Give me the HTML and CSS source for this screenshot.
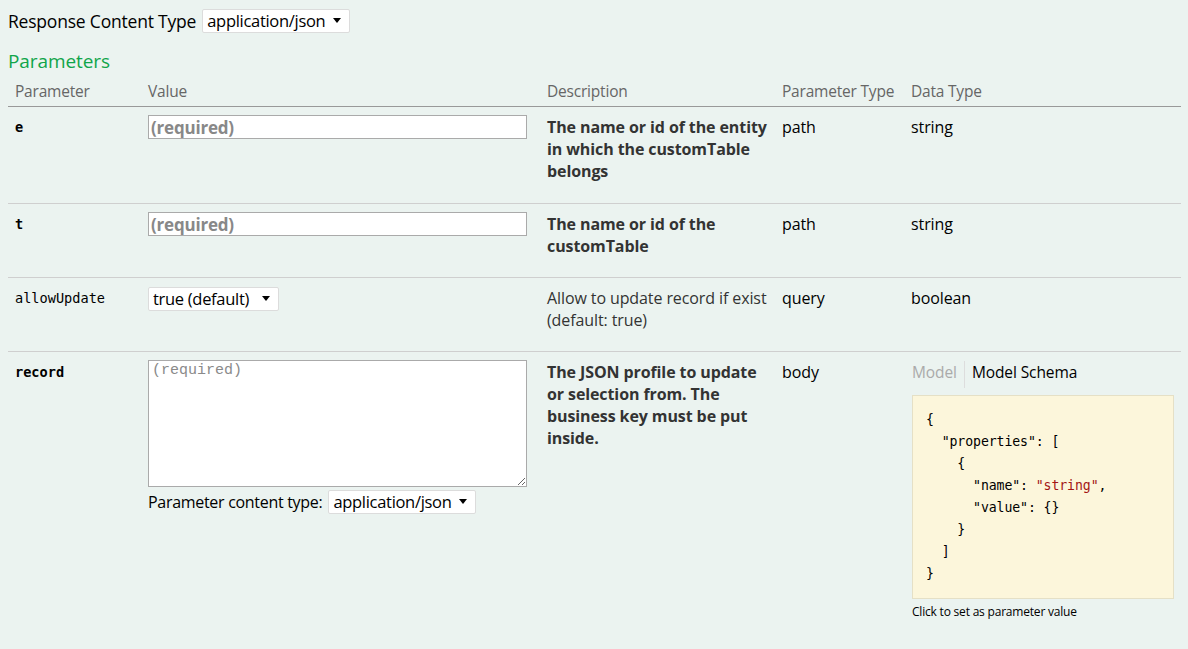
FILE: index.html
```html
<!DOCTYPE html>
<html lang="en">
<head>
<meta charset="utf-8">
<title>Parameters</title>
<link rel="stylesheet" href="styles.css">
</head>
<body>
<div class="content">
  <div class="response-type">
    <label class="rct-label">Response Content Type</label>
    <span class="select-wrap sel-rct">
      <select class="sel"><option>application/json</option></select>
    </span>
  </div>

  <h4 class="params-title">Parameters</h4>

  <table class="params">
    <colgroup>
      <col class="c1"><col class="c2"><col class="c3"><col class="c4"><col class="c5">
    </colgroup>
    <thead>
      <tr>
        <th>Parameter</th>
        <th>Value</th>
        <th>Description</th>
        <th>Parameter Type</th>
        <th>Data Type</th>
      </tr>
    </thead>
    <tbody>
      <tr class="r1">
        <td class="code required">e</td>
        <td><input class="text-in" type="text" placeholder="(required)"></td>
        <td class="desc strong">The name or id of the entity in which the customTable belongs</td>
        <td class="ptype">path</td>
        <td class="dtype">string</td>
      </tr>
      <tr>
        <td class="code required">t</td>
        <td><input class="text-in" type="text" placeholder="(required)"></td>
        <td class="desc strong">The name or id of the customTable</td>
        <td class="ptype">path</td>
        <td class="dtype">string</td>
      </tr>
      <tr>
        <td class="code">allowUpdate</td>
        <td>
          <span class="select-wrap sel-bool">
            <select class="sel"><option>true (default)</option><option>false</option></select>
          </span>
        </td>
        <td class="desc">Allow to update record if exist (default: true)</td>
        <td class="ptype">query</td>
        <td class="dtype">boolean</td>
      </tr>
      <tr class="last">
        <td class="code required">record</td>
        <td>
          <textarea class="body-ta" placeholder="(required)"></textarea>
          <div class="pct">
            <label>Parameter content type:</label>
            <span class="select-wrap sel-pct">
              <select class="sel"><option>application/json</option></select>
            </span>
          </div>
        </td>
        <td class="desc strong">The JSON profile to update or selection from. The business key must be put inside.</td>
        <td class="ptype">body</td>
        <td class="dtype">
          <div class="model-tabs">
            <span class="tab tab-off">Model</span>
            <span class="tab tab-on">Model Schema</span>
          </div>
          <pre class="schema">{
  "properties": [
    {
      "name": <span class="str">"string"</span>,
      "value": {}
    }
  ]
}</pre>
          <div class="hint">Click to set as parameter value</div>
        </td>
      </tr>
    </tbody>
  </table>
</div>
</body>
</html>
```

FILE: styles.css
```css
html, body {
  margin: 0;
  padding: 0;
  background: #ebf3f0;
}

body {
  font-family: "Open Sans", "Noto Sans", sans-serif;
  color: #000;
  height: 649px;
  overflow: hidden;
}

.content {
  padding: 9px 7px 0 8px;
}

.response-type {
  display: flex;
  align-items: center;
  gap: 6px;
  height: 24px;
}

.rct-label {
  font-size: 17.5px;
  letter-spacing: -0.2px;
}

.select-wrap {
  position: relative;
  display: inline-block;
}

.select-wrap::after {
  content: "";
  position: absolute;
  right: 9px;
  top: 50%;
  margin-top: -3px;
  border-left: 4px solid transparent;
  border-right: 4px solid transparent;
  border-top: 5px solid #000;
  pointer-events: none;
}

.sel {
  display: block;
  -webkit-appearance: none;
  appearance: none;
  background: #fff;
  border: 1px solid #dcdcdc;
  border-radius: 2px;
  font-family: "Open Sans", "Noto Sans", sans-serif;
  font-size: 16.5px;
  color: #000;
  height: 24px;
  padding: 0 0 0 4px;
  margin: 0;
  line-height: 22px;
  letter-spacing: -0.3px;
}

.sel-rct .sel { width: 148px; }
.sel-bool .sel { width: 131px; }
.sel-pct .sel { width: 148px; }

.params-title {
  margin: 15px 0 0 0;
  font-size: 19px;
  font-weight: normal;
  color: #10a54a;
  line-height: 26px;
  letter-spacing: -0.1px;
}

.params {
  width: 1173px;
  border-collapse: collapse;
  table-layout: fixed;
  margin-top: 7px;
}

.c1 { width: 133px; }
.c2 { width: 399px; }
.c3 { width: 235px; }
.c4 { width: 129px; }
.c5 { width: 277px; }

.params th {
  text-align: left;
  font-weight: normal;
  font-size: 15.5px;
  color: #666;
  padding: 0 7px 5px 7px;
  line-height: 20px;
  border-bottom: 1px solid #999;
  white-space: nowrap;
  letter-spacing: -0.2px;
}

.params td {
  vertical-align: top;
  padding: 9px 7px 20px 7px;
  font-size: 16px;
  line-height: 22px;
  border-bottom: 1px solid #cfcfcf;
}

.params tr.r1 td {
  padding-bottom: 21px;
}

.params tr.last td {
  border-bottom: none;
}

.params td.code {
  font-family: "DejaVu Sans Mono", "Liberation Mono", monospace;
  font-size: 13.6px;
  color: #000;
}

.params td.code.required {
  font-weight: bold;
}

.text-in {
  display: block;
  box-sizing: border-box;
  width: 379px;
  height: 24px;
  margin: -1px 0 0 0;
  border: 1px solid #aaa;
  background: #fff;
  padding: 0 2px;
  font-family: "Open Sans", "Noto Sans", sans-serif;
  font-size: 17px;
  font-weight: bold;
  letter-spacing: -0.2px;
}

.text-in::placeholder {
  color: #888;
  font-weight: bold;
}

.params td.desc {
  color: #333;
  padding-right: 4px;
  letter-spacing: -0.1px;
}

.params td.desc.strong {
  font-weight: bold;
}

.params td.ptype,
.params td.dtype {
  font-size: 16px;
  color: #000;
  letter-spacing: -0.1px;
}

.body-ta {
  display: block;
  box-sizing: border-box;
  width: 379px;
  height: 127px;
  margin: -1px 0 0 0;
  border: 1px solid #aaa;
  background: #fff;
  padding: 1px 3px;
  font-family: "Liberation Mono", "Courier New", monospace;
  font-size: 15px;
  resize: both;
}

.body-ta::placeholder {
  color: #8a8a8a;
}

.pct {
  display: flex;
  align-items: center;
  gap: 6px;
  margin-top: 3px;
  font-size: 16px;
  letter-spacing: -0.3px;
}

.model-tabs {
  display: flex;
  align-items: stretch;
  margin-left: 1px;
  font-size: 15.5px;
  line-height: 22px;
  letter-spacing: -0.1px;
}

.tab {
  padding: 0 7px 5px 0;
}

.tab-off {
  color: #aaa;
  border-right: 1px solid #ddd;
}

.tab-on {
  color: #000;
  padding-left: 7px;
}

.schema {
  margin: 7px 0 0 1px;
  box-sizing: border-box;
  width: 262px;
  background: #fcf6db;
  border: 1px solid #e5e0c6;
  padding: 13px 13px 13px 13px;
  font-family: "DejaVu Sans Mono", "Liberation Mono", monospace;
  font-size: 13.2px;
  line-height: 22px;
  color: #000;
  white-space: pre;
  overflow: hidden;
}

.str {
  color: #a31515;
}

.hint {
  margin: 3px 0 0 1px;
  font-size: 12px;
  line-height: 20px;
  color: #000;
  letter-spacing: -0.2px;
}
```
